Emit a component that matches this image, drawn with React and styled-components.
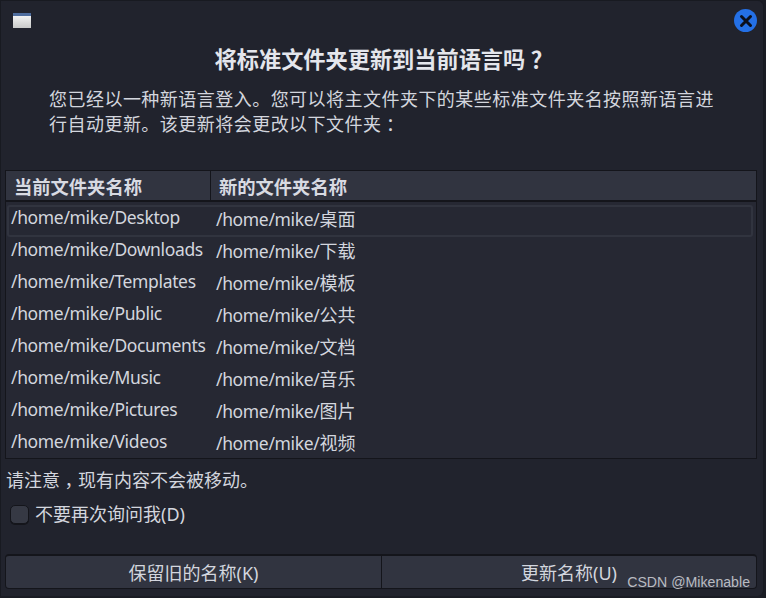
import React from 'react';
import styled, { createGlobalStyle } from 'styled-components';

const folders = [
    ['/home/mike/Desktop', '桌面'],
    ['/home/mike/Downloads', '下载'],
    ['/home/mike/Templates', '模板'],
    ['/home/mike/Public', '公共'],
    ['/home/mike/Documents', '文档'],
    ['/home/mike/Music', '音乐'],
    ['/home/mike/Pictures', '图片'],
    ['/home/mike/Videos', '视频'],
];

const App = () => {
    return (
        <Window>
            <GlobalStyle />
            <TitleBar>
                <WindowIcon />
                <CloseButton>
                    <svg width="14" height="14" viewBox="0 0 14 14">
                        <path d="M2.5 2.5 L11.5 11.5 M11.5 2.5 L2.5 11.5" stroke="#0b0f1c" strokeWidth="3" strokeLinecap="round" />
                    </svg>
                </CloseButton>
            </TitleBar>
            <Title>将标准文件夹更新到当前语言吗<Punct>？</Punct></Title>
            <Message>
                <Line>您已经以一种新语言登入。您可以将主文件夹下的某些标准文件夹名按照新语言进</Line>
                <Line>行自动更新。该更新将会更改以下文件夹<Punct>：</Punct></Line>
            </Message>
            <Table>
                <Header>
                    <HeaderCell>当前文件夹名称</HeaderCell>
                    <HeaderCell>新的文件夹名称</HeaderCell>
                </Header>
                <List>
                    {folders.map(([from, to], i) => (
                        <Row key={from} $focused={i === 0}>
                            <From>{from}</From>
                            <To>/home/mike/<Cjk>{to}</Cjk></To>
                        </Row>
                    ))}
                </List>
            </Table>
            <Note>请注意<Punct>，</Punct>现有内容不会被移动。</Note>
            <CheckRow>
                <Check />
                不要再次询问我(D)
            </CheckRow>
            <Buttons>
                <Button>保留旧的名称(K)</Button>
                <Button>更新名称(U)</Button>
            </Buttons>
            <Watermark>CSDN @Mikenable</Watermark>
        </Window>
    )
}

const GlobalStyle = createGlobalStyle`
html, body {
    margin: 0;
    background: #1a1c24;
}
* {
    box-sizing: border-box;
}
`

const Window = styled.div`
position: relative;
display: flex;
flex-direction: column;
width: 764px;
height: 596px;
padding: 0 6px 0 4px;
background: #21232d;
border-top: 1px solid #181a21;
border-left: 1px solid #181a21;
border-right: 1px solid #181a21;
border-radius: 0 6px 6px 0;
color: #d3d6de;
font-family: "Noto Sans", "Noto Sans CJK SC", sans-serif;
font-size: 18px;
`

const TitleBar = styled.div`
display: flex;
justify-content: space-between;
align-items: center;
height: 39px;
padding: 0 0 0 8px;
`

const WindowIcon = styled.div`
width: 18px;
height: 15px;
background: linear-gradient(#4f6d9e 0, #4f6d9e 3px, #f2f2f2 3px, #c9c9c9 100%);
`

const CloseButton = styled.div`
display: flex;
align-items: center;
justify-content: center;
width: 23px;
height: 23px;
border-radius: 50%;
background: #2470e6;
`

const Title = styled.h1`
margin: 4px 0 0;
text-align: center;
font-size: 22.2px;
line-height: 32px;
font-weight: 700;
color: #e4e6ec;
`

// full width marks sit in the middle of their cell here, not to the left
const Punct = styled.span`
font-feature-settings: "halt";
padding: 0 0.25em;
`

const Message = styled.div`
margin-top: 11px;
padding-left: 44px;
height: 83px;
`

const Line = styled.div`
line-height: 25px;
letter-spacing: 0.47px;
white-space: nowrap;
`

const Table = styled.div`
display: flex;
flex-direction: column;
width: 752px;
`

const Header = styled.div`
display: grid;
grid-template-columns: 204px 1fr;
height: 31px;
background: #313440;
border: 1px solid #14151b;
`

const HeaderCell = styled.div`
display: flex;
align-items: center;
padding-left: 8px;
font-weight: 700;
font-size: 18.3px;
color: #d8dae2;
& + & {
    border-left: 1px solid #14151b;
}
`

const List = styled.div`
display: flex;
flex-direction: column;
height: 258px;
padding: 3px 3px 0 1px;
background: #262833;
border: 1px solid #14151b;
`

const Row = styled.div`
display: grid;
grid-template-columns: 205px 1fr;
align-items: center;
height: 32px;
flex-shrink: 0;
padding-left: 4px;
border-radius: 3px;
font-size: 17.5px;
letter-spacing: -0.35px;
box-shadow: ${p => p.$focused ? 'inset 0 0 0 2px #31343f' : 'none'};
`

const From = styled.div`
white-space: nowrap;
line-height: 1;
margin-top: -6px;
`

const To = styled.div`
white-space: nowrap;
line-height: 1;
margin-top: -3px;
`

const Cjk = styled.span`
font-size: 18px;
letter-spacing: 0;
`

const Note = styled.div`
margin-top: 9px;
line-height: 24px;
padding-left: 1px;
`

const CheckRow = styled.div`
display: flex;
align-items: center;
gap: 6px;
margin-top: 10px;
padding-left: 5px;
line-height: 24px;
`

const Check = styled.div`
width: 19px;
height: 19px;
border-radius: 5px;
background: #363944;
border: 1px solid #14151b;
box-shadow: 0 1px 0 #14151b;
`

const Buttons = styled.div`
display: grid;
grid-template-columns: 377px 1fr;
width: 752px;
height: 35px;
margin-top: 28px;
`

const Button = styled.div`
display: flex;
align-items: center;
justify-content: center;
background: #313440;
border: 1px solid #14151b;
border-top-width: 2px;
& + & {
    border-left: none;
    border-radius: 0 4px 4px 0;
}
&:first-child {
    border-radius: 4px 0 0 4px;
}
`

const Watermark = styled.div`
position: absolute;
right: 13px;
bottom: 6px;
font-family: "Liberation Sans", sans-serif;
font-size: 14.15px;
color: #b9bbc2;
`

export default App;
